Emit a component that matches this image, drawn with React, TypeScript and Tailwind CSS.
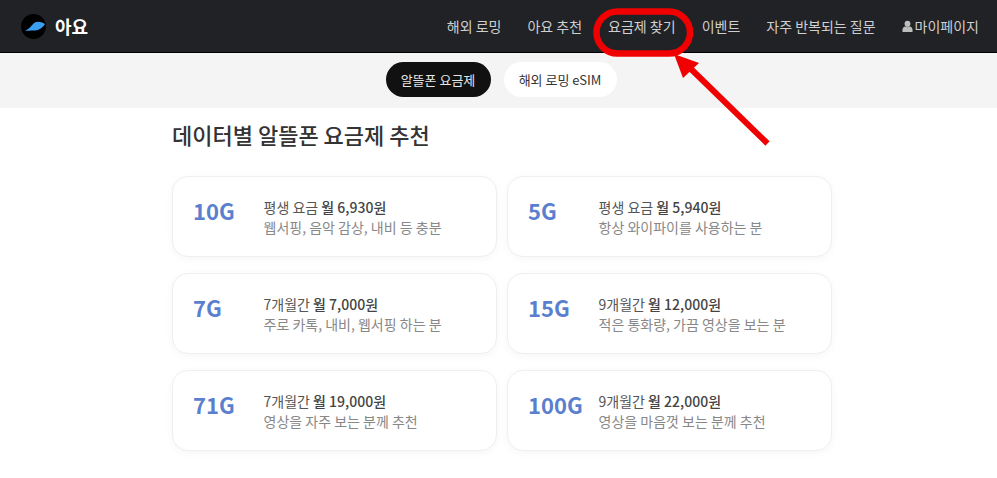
const plans = [
  { data: "10G", period: "평생 요금", price: "월 6,930원", desc: "웹서핑, 음악 감상, 내비 등 충분" },
  { data: "5G", period: "평생 요금", price: "월 5,940원", desc: "항상 와이파이를 사용하는 분" },
  { data: "7G", period: "7개월간", price: "월 7,000원", desc: "주로 카톡, 내비, 웹서핑 하는 분" },
  { data: "15G", period: "9개월간", price: "월 12,000원", desc: "적은 통화량, 가끔 영상을 보는 분" },
  { data: "71G", period: "7개월간", price: "월 19,000원", desc: "영상을 자주 보는 분께 추천" },
  { data: "100G", period: "9개월간", price: "월 22,000원", desc: "영상을 마음껏 보는 분께 추천" },
]

const navItems = ["해외 로밍", "아요 추천", "요금제 찾기", "이벤트", "자주 반복되는 질문"]

function Logo() {
  return (
    <svg width="25" height="25" viewBox="0 0 25 25">
      <circle cx="12.5" cy="12.5" r="12.5" fill="#000" />
      <path d="M4 16.5 C8 15.5 10 12 13 9 C16 7 20 7.5 24 10 C22 13.5 18 16.5 14 16.5 C11 16.3 8 17 4 16.5 Z" fill="#3a9ff0" />
    </svg>
  )
}

function Annotation() {
  return (
    <svg className="absolute left-0 top-0 pointer-events-none" width="997" height="160" viewBox="0 0 997 160">
      <rect x="596.5" y="11.5" width="93.5" height="42" rx="21" fill="none" stroke="#f00000" strokeWidth="6.5" />
      <path d="M767.5 143.5 L691 69" stroke="#f00000" strokeWidth="6" fill="none" />
      <path d="M674 54 L699 63 L683 78 Z" fill="#f00000" />
    </svg>
  )
}

export default function App() {
  return (
    <div className="relative min-h-[478px] bg-white font-['Noto_Sans_CJK_KR','Noto_Sans',sans-serif]">
      <header className="flex h-[53px] items-center justify-between border-b border-black bg-[#212226] pl-[21px] pr-[18px]">
        <div className="flex items-center gap-[9px]">
          <Logo />
          <span className="text-[18px] font-bold text-white">아요</span>
        </div>
        <nav className="flex items-center gap-[26px] text-[14px] text-[#cfcfcf]">
          {navItems.map((item) => (
            <a key={item}>{item}</a>
          ))}
          <a className="flex items-center gap-[2px]">
            <svg width="11" height="13" viewBox="0 0 12 13" fill="#bdbdbd">
              <ellipse cx="6" cy="3.6" rx="3.2" ry="3.4" />
              <path d="M0.5 12.5 V10 C0.5 8 2 6.5 3.5 6.5 C5 7.6 7 7.6 8.5 6.5 C10 6.5 11.5 8 11.5 10 V12.5 Z" />
            </svg>
            마이페이지
          </a>
        </nav>
      </header>

      <div className="flex h-[55px] items-center justify-center gap-[13px] bg-[#f4f4f4] pb-[2px] pl-[5px]">
        <button className="h-[35px] w-[105px] rounded-full bg-[#111111] text-[13px] text-[#e5e5e5]">알뜰폰 요금제</button>
        <button className="h-[35px] w-[113px] rounded-full bg-white text-[13px] text-[#333333]">해외 로밍 eSIM</button>
      </div>

      <main className="ml-[172px] w-[660px]">
        <h1 className="mt-[10px] text-[22px] leading-[33px] font-medium text-[#333333]">데이터별 알뜰폰 요금제 추천</h1>
        <div className="mt-[25px] grid grid-cols-2 gap-x-[10px] gap-y-[16px]">
          {plans.map((plan) => (
            <div
              key={plan.data}
              className="flex h-[81px] items-start rounded-[16px] border border-[#efefef] bg-white pl-[20px] pt-[20px] shadow-[0_2px_8px_rgba(0,0,0,0.04)]"
            >
              <div className="-mt-[3px] w-[70.5px] text-[22px] leading-[33px] font-bold text-[#5b7fcf]">{plan.data}</div>
              <div className="text-[14px] leading-[20px]">
                <div className="text-[#555555]">
                  {plan.period} <span className="font-medium text-[#444444]">{plan.price}</span>
                </div>
                <div className="text-[#888888]">{plan.desc}</div>
              </div>
            </div>
          ))}
        </div>
      </main>

      <Annotation />
    </div>
  )
}
